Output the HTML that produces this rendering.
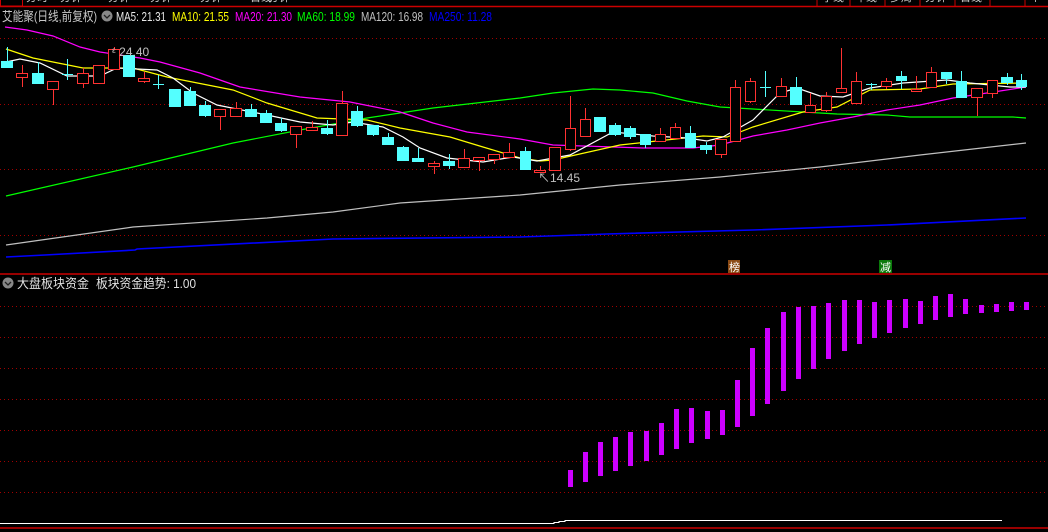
<!DOCTYPE html>
<html><head><meta charset="utf-8"><style>
html,body{margin:0;padding:0;background:#000;width:1048px;height:532px;overflow:hidden}
svg{display:block}
text{font-family:"Liberation Sans","Noto Sans CJK SC",sans-serif}
</style></head><body>
<svg id="s" width="1048" height="532" xmlns="http://www.w3.org/2000/svg">
<rect width="1048" height="532" fill="#000"/>
<g fill="#ccc" font-size="11">
<text x="26" y="1">分时</text><text x="60" y="1">分钟</text><text x="108" y="1">分钟</text><text x="150" y="1">分钟</text><text x="200" y="1">分钟</text><text x="250" y="1">日线</text><text x="268" y="1">分钟</text>
<text x="822" y="1">季线</text><text x="855" y="1">年线</text><text x="890" y="1">多周</text><text x="925" y="1">分钟</text><text x="960" y="1">日线</text><text x="1030" y="1">个</text>
</g>
<rect x="0.5" y="-1" width="22" height="7" fill="none" stroke="#c00"/>
<line x1="0" y1="6.5" x2="1048" y2="6.5" stroke="#c00" stroke-width="1.5"/>
<g stroke="#c00"><line x1="817" y1="0" x2="817" y2="6"/><line x1="850" y1="0" x2="850" y2="6"/><line x1="885" y1="0" x2="885" y2="6"/><line x1="920" y1="0" x2="920" y2="6"/><line x1="955" y1="0" x2="955" y2="6"/><line x1="990" y1="0" x2="990" y2="6"/><line x1="1025" y1="0" x2="1025" y2="6"/></g>
<text x="2" y="21" font-size="13" fill="#c8c8c8" textLength="95" lengthAdjust="spacingAndGlyphs">艾能聚(日线,前复权)</text>
<circle cx="107" cy="16" r="5.5" fill="#888"/><path d="M104 15 L107 18 L110 15" stroke="#222" stroke-width="1.3" fill="none"/>
<g font-size="13"><text x="116" y="21" fill="#e8e8e8" textLength="50" lengthAdjust="spacingAndGlyphs">MA5: 21.31</text><text x="172" y="21" fill="#ffff00" textLength="57" lengthAdjust="spacingAndGlyphs">MA10: 21.55</text><text x="235" y="21" fill="#ff00ff" textLength="57" lengthAdjust="spacingAndGlyphs">MA20: 21.30</text><text x="297" y="21" fill="#00ff00" textLength="58" lengthAdjust="spacingAndGlyphs">MA60: 18.99</text><text x="361" y="21" fill="#c0c0c0" textLength="62" lengthAdjust="spacingAndGlyphs">MA120: 16.98</text><text x="429" y="21" fill="#0000ff" textLength="63" lengthAdjust="spacingAndGlyphs">MA250: 11.28</text></g>
<g stroke="#a00000" stroke-dasharray="1 3" stroke-width="1">
<line x1="0" y1="38.5" x2="1048" y2="38.5"/><line x1="0" y1="104.5" x2="1048" y2="104.5"/><line x1="0" y1="169.5" x2="1048" y2="169.5"/><line x1="0" y1="235.5" x2="1048" y2="235.5"/>
<line x1="0" y1="306.5" x2="1048" y2="306.5"/><line x1="0" y1="337.5" x2="1048" y2="337.5"/><line x1="0" y1="368.5" x2="1048" y2="368.5"/><line x1="0" y1="399.5" x2="1048" y2="399.5"/><line x1="0" y1="430.5" x2="1048" y2="430.5"/><line x1="0" y1="461.5" x2="1048" y2="461.5"/><line x1="0" y1="492.5" x2="1048" y2="492.5"/>
</g>
<g fill="none" stroke-width="1.2">
<polyline stroke="#0000ff" stroke-width="1.6" points="6,257 45,255 135,250 137,249 333,239 520,237 607,234 753,230 887,225 1026,218"/>
<polyline stroke="#c0c0c0" points="6,245 133,227 267,218 333,212 400,203 520,195 620,185 720,177 820,167 920,155 1026,143"/>
<polyline stroke="#00ff00" points="6,196 133,167 233,143 300,130 367,118 433,108 520,98 553,93 593,89 620,90 653,93 687,101 720,107 753,109 803,112 837,114 887,115 910,117 1013,117 1026,118"/>
<polyline stroke="#ff00ff" points="5,27 27,30 53,36 80,47 100,52 140,58 160,62 200,73 240,87 300,97 350,102 400,112 433,123 467,132 520,139 553,145 643,148 693,148 720,145 753,136 787,130 820,123 853,117 887,110 920,105 953,98 987,93 1026,87"/>
<polyline stroke="#ffff00" points="6,49 33,58 83,68 133,68 167,77 233,90 267,103 317,118 367,120 400,128 450,137 483,147 520,158 540,161 553,160 620,145 703,136 727,137 753,127 803,112 837,107 870,90 920,89 953,84 1026,83"/>
<polyline stroke="#ffffff" points="6,62 20,59 40,63 67,76 100,76 117,68 157,70 173,78 193,93 217,105 267,115 300,122 333,125 353,122 383,127 403,137 420,148 447,158 483,162 513,157 537,161 570,155 613,132 653,136 687,138 707,141 723,137 753,120 780,93 797,88 820,96 843,97 870,88 903,83 947,80 970,83 1010,87 1026,87"/>
</g>
<g id="c"></g>
<g font-size="12" fill="#c0c0c0"><text x="112" y="56">ᵋ 24.40</text><text x="538" y="182">↖14.45</text></g>
<rect x="728" y="260" width="12" height="13" fill="#8b4a14"/><text x="729" y="271" font-size="11" fill="#fff">榜</text>
<rect x="879" y="260" width="13" height="13" fill="#0a7a0a"/><text x="880" y="271" font-size="11" fill="#fff">减</text>
<line x1="0" y1="274" x2="1048" y2="274" stroke="#c00" stroke-width="1.5"/>
<circle cx="8" cy="283" r="5.5" fill="#888"/><path d="M5 282 L8 285 L11 282" stroke="#222" stroke-width="1.3" fill="none"/>
<text x="17" y="288" font-size="13" fill="#e0e0e0" textLength="72" lengthAdjust="spacingAndGlyphs">大盘板块资金</text><text x="96" y="288" font-size="13" fill="#e0e0e0" textLength="100" lengthAdjust="spacingAndGlyphs">板块资金趋势: 1.00</text>
<g id="b" fill="#cc00ff"></g>
<polyline fill="none" stroke="#fff" stroke-width="1" points="0,523.5 554,523.5 554,522.5 559,522.5 559,521.5 565,521.5 565,520.5 1002,520.5"/>
<line x1="0" y1="528" x2="1048" y2="528" stroke="#c00" stroke-width="1.5"/>
</svg>
<script>
var NS="http://www.w3.org/2000/svg";
function el(p,t,a){var e=document.createElementNS(NS,t);for(var k in a)e.setAttribute(k,a[k]);p.appendChild(e);}
var C=[[1,12,61,67,47,67,'c'],[16,27,73,77,65,87,'r'],[32,43,73,83,62,83,'c'],[47,58,81,89,81,105,'r'],[62,72,74,75,59,80,'c'],[77,88,73,83,68,88,'r'],[93,104,65,83,65,83,'r'],[108,119,49,69,47,69,'r'],[123,134,55,76,55,77,'c'],[138,149,78,81,72,83,'r'],[153,163,84,85,75,89,'c'],[169,180,89,106,89,107,'c'],[184,195,91,105,87,105,'c'],[199,210,105,115,101,117,'c'],[214,225,109,116,109,130,'r'],[230,241,108,116,102,116,'r'],[245,256,109,116,104,117,'c'],[260,271,113,122,110,123,'c'],[275,286,123,130,118,132,'c'],[290,301,126,134,126,148,'r'],[306,317,127,130,121,130,'r'],[321,332,128,133,120,135,'c'],[336,347,103,135,91,135,'r'],[351,362,111,125,106,127,'c'],[367,378,125,134,125,136,'c'],[382,393,137,144,133,145,'c'],[397,408,147,160,146,161,'c'],[412,423,158,161,148,161,'c'],[428,439,163,166,161,174,'r'],[443,454,161,165,154,169,'c'],[458,469,158,167,149,168,'r'],[473,484,157,160,157,171,'r'],[488,499,154,159,154,164,'r'],[503,514,152,157,143,157,'r'],[520,530,151,169,147,169,'c'],[534,545,170,172,166,172,'r'],[549,560,147,170,147,170,'r'],[565,575,128,149,96,151,'r'],[580,590,119,136,108,136,'r'],[594,605,117,131,117,131,'c'],[609,620,125,134,123,136,'c'],[624,635,128,136,126,139,'c'],[640,650,134,144,134,148,'c'],[655,665,134,141,128,141,'r'],[670,680,127,138,123,138,'r'],[685,695,133,147,126,147,'c'],[700,711,145,149,142,154,'c'],[715,726,139,154,139,158,'r'],[730,740,87,141,80,141,'r'],[745,755,81,101,78,103,'r'],[760,770,87,88,71,97,'c'],[776,786,86,96,78,96,'r'],[790,801,87,104,77,104,'c'],[805,815,105,112,93,112,'r'],[821,831,96,110,92,112,'r'],[836,846,88,92,48,92,'r'],[851,861,81,103,72,103,'r'],[866,876,84,85,83,90,'c'],[881,891,81,86,78,89,'r'],[896,906,76,80,71,89,'c'],[911,921,89,91,76,91,'r'],[926,936,72,87,67,87,'r'],[941,951,72,78,72,84,'c'],[956,966,81,97,71,97,'c'],[971,982,88,97,88,116,'r'],[987,997,80,93,80,98,'r'],[1001,1012,77,82,73,85,'c'],[1016,1026,80,86,74,90,'c']];
var g=document.getElementById('c');
C.forEach(function(d){var cx=Math.round((d[0]+d[1])/2)+0.5,col=d[6]=='r'?'#ff3232':'#54ffff';
if(d[3]-d[2]<=1){el(g,'line',{x1:d[0],x2:d[1]+1,y1:d[2]+0.5,y2:d[2]+0.5,stroke:col});el(g,'line',{x1:cx,x2:cx,y1:d[4],y2:d[5],stroke:col});return;}
el(g,'line',{x1:cx,x2:cx,y1:d[4],y2:d[5],stroke:col});
if(d[6]=='r'){el(g,'rect',{x:d[0]+0.5,y:d[2]+0.5,width:d[1]-d[0],height:d[3]-d[2],fill:'#000',stroke:col});}
else el(g,'rect',{x:d[0],y:d[2],width:d[1]-d[0]+1,height:d[3]-d[2]+1,fill:col});});
var B=[[568,470,487],[583,452,482],[598,442,476],[613,437,471],[628,432,466],[644,431,461],[659,423,455],[674,409,449],[689,408,443],[705,411,439],[720,410,435],[735,380,427],[750,348,416],[765,328,404],[781,312,391],[796,307,379],[811,306,369],[826,303,359],[842,300,351],[857,300,344],[872,302,338],[887,300,333],[903,299,328],[918,301,324],[933,296,320],[948,294,317],[963,299,314],[979,305,313],[994,304,312],[1009,302,311],[1024,302,310]];
var gb=document.getElementById('b');
B.forEach(function(d){el(gb,'rect',{x:d[0],y:d[1],width:5,height:d[2]-d[1]});});
</script>
</body></html>
